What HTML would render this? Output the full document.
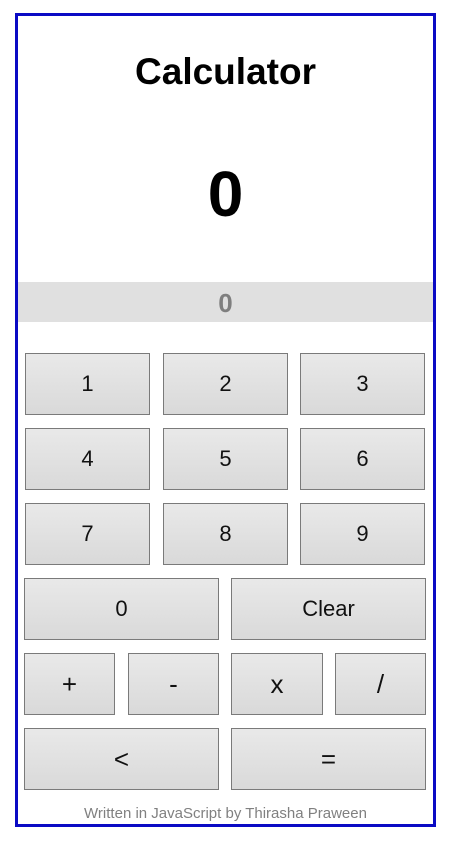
<!DOCTYPE html>
<html><head><style>
*{margin:0;padding:0;box-sizing:border-box}
body{width:451px;height:851px;background:#fff;position:relative;font-family:"Liberation Sans",sans-serif;overflow:hidden}
.frame{position:absolute;left:15px;top:13px;width:421px;height:814px;border:3px solid #0a0ac4}
.t{position:absolute;left:0;width:451px;text-align:center}
.b{position:absolute;height:62px;border:1px solid #7a7a7a;background:linear-gradient(#e9e9e9,#d9d9d9);font-size:22px;color:#111;display:flex;align-items:center;justify-content:center}
</style></head><body>
<div class="frame"></div>
<div class="t" style="top:50px;font-size:37px;font-weight:bold;line-height:44px">Calculator</div>
<div class="t" style="top:159px;font-size:64px;font-weight:bold;line-height:70px">0</div>
<div style="position:absolute;left:18px;top:282px;width:415px;height:40px;background:#e0e0e0"></div>
<div class="t" style="top:288px;font-size:26px;font-weight:bold;color:#7f7f7f;line-height:30px">0</div>
<div class="b" style="left:25px;top:353px;width:125px">1</div>
<div class="b" style="left:163px;top:353px;width:125px">2</div>
<div class="b" style="left:300px;top:353px;width:125px">3</div>
<div class="b" style="left:25px;top:428px;width:125px">4</div>
<div class="b" style="left:163px;top:428px;width:125px">5</div>
<div class="b" style="left:300px;top:428px;width:125px">6</div>
<div class="b" style="left:25px;top:503px;width:125px">7</div>
<div class="b" style="left:163px;top:503px;width:125px">8</div>
<div class="b" style="left:300px;top:503px;width:125px">9</div>
<div class="b" style="left:24px;top:578px;width:195px">0</div>
<div class="b" style="left:231px;top:578px;width:195px">Clear</div>
<div class="b" style="left:24px;top:653px;width:91px;font-size:26px">+</div>
<div class="b" style="left:128px;top:653px;width:91px;font-size:26px">-</div>
<div class="b" style="left:231px;top:653px;width:92px;font-size:26px">x</div>
<div class="b" style="left:335px;top:653px;width:91px;font-size:26px">/</div>
<div class="b" style="left:24px;top:728px;width:195px;font-size:26px">&lt;</div>
<div class="b" style="left:231px;top:728px;width:195px;font-size:26px">=</div>
<div class="t" style="top:805px;font-size:15px;color:#808080;line-height:18px">Written in JavaScript by Thirasha Praween</div>
</body></html>
